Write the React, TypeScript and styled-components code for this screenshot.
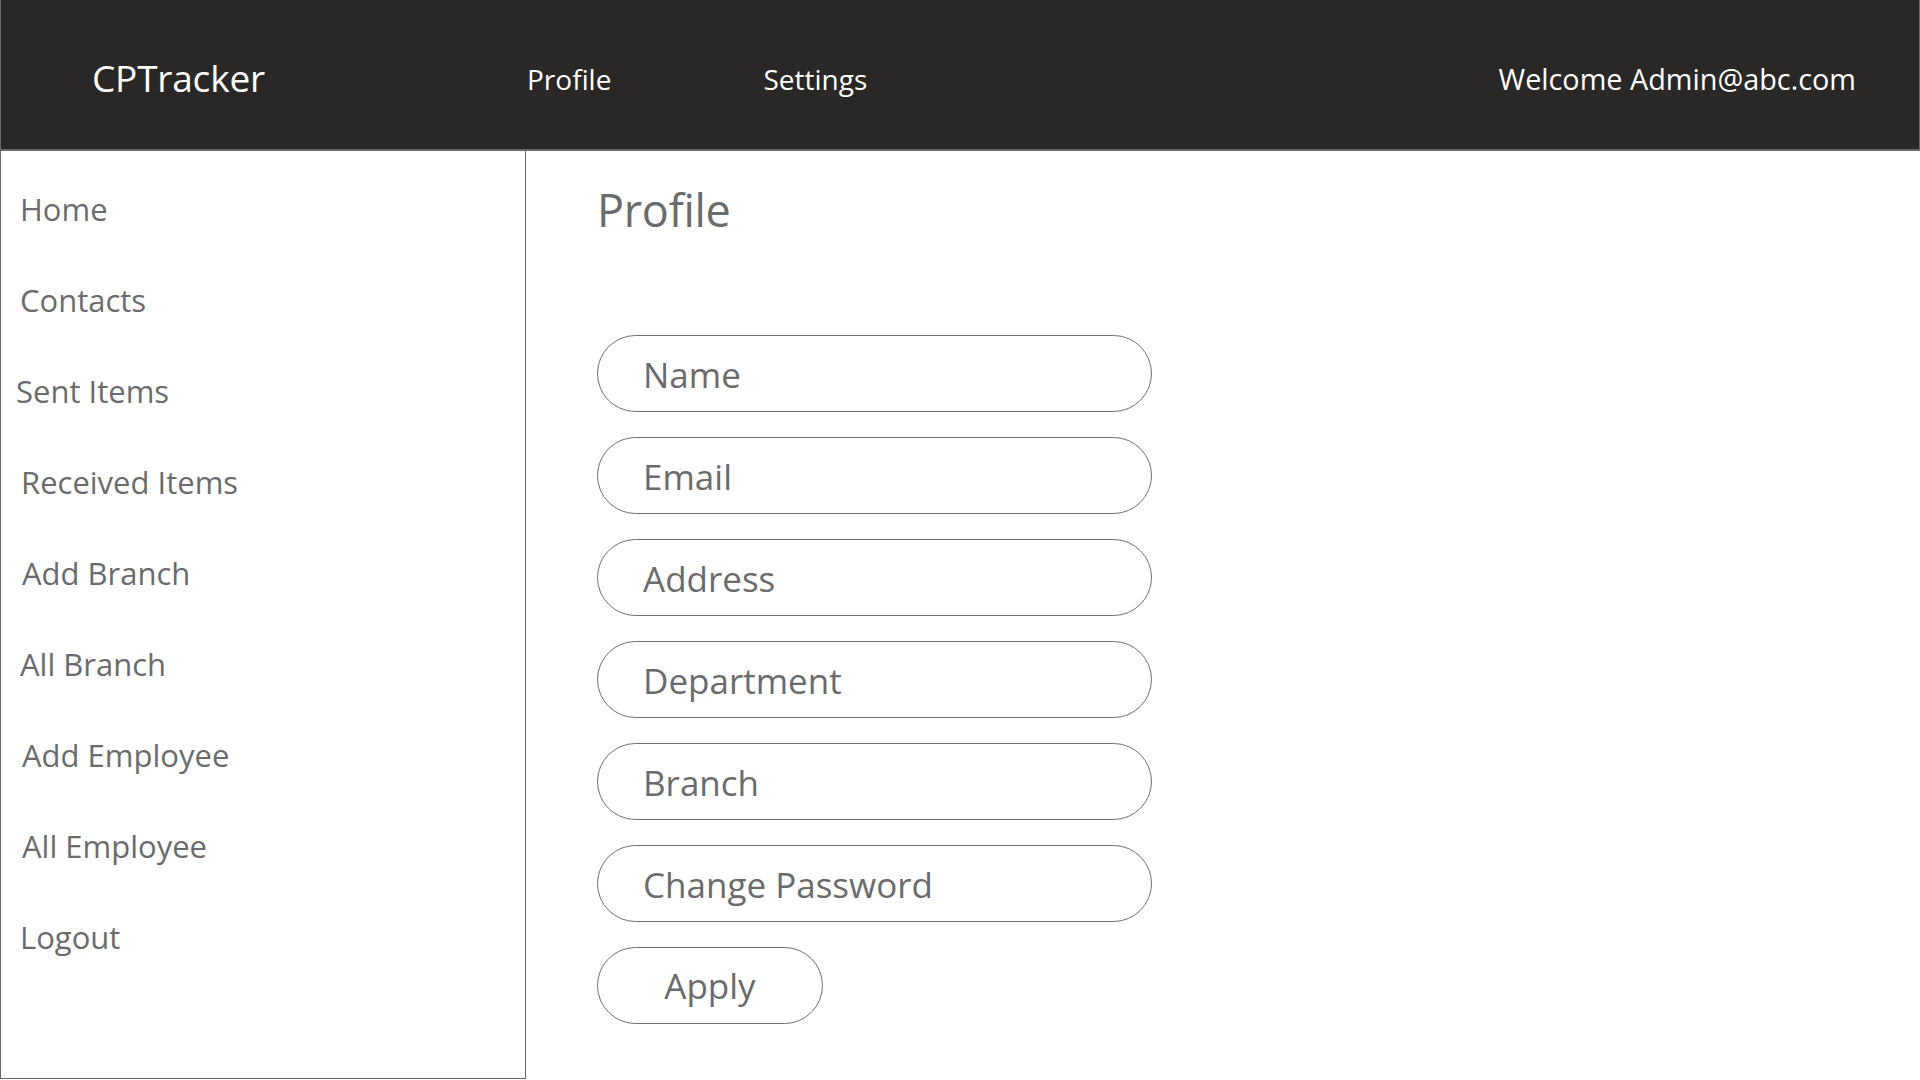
import React from "react";
import styled, { createGlobalStyle } from "styled-components";

const GlobalStyle = createGlobalStyle`
  html, body {
    margin: 0;
    padding: 0;
    background: #ffffff;
  }
  * {
    box-sizing: border-box;
  }
  body {
    font-family: "Open Sans", "Noto Sans", Arial, sans-serif;
  }
`;

const Page = styled.div`
  width: 1920px;
  height: 1080px;
  display: flex;
  flex-direction: column;
  overflow: hidden;
  background: #ffffff;
`;

const Header = styled.header`
  height: 151px;
  flex: none;
  display: flex;
  align-items: center;
  background: #292826;
  border: 1px solid #6a6a6a;
  border-top: none;
  border-bottom-width: 2px;
  padding: 0 63px 0 91px;
  color: #ffffff;
`;

const Brand = styled.div`
  width: 435px;
  font-size: 37px;
  line-height: 1;
  padding-top: 5px;
  letter-spacing: -0.2px;
`;

const Nav = styled.nav`
  display: flex;
  gap: 152px;
  padding-top: 8px;
`;

const NavLink = styled.a`
  font-size: 28px;
  color: #ffffff;
  text-decoration: none;
  line-height: 1;
`;

const Welcome = styled.div`
  margin-left: auto;
  font-size: 28.8px;
  line-height: 1;
  padding-top: 10px;
`;

const Body = styled.div`
  flex: 1;
  display: flex;
  min-height: 0;
`;

const Sidebar = styled.aside`
  width: 526px;
  height: 928px;
  flex: none;
  border: 1px solid #6a6a6a;
  border-top: none;
  padding-top: 13px;
  display: flex;
  flex-direction: column;
`;

const SideItem = styled.a<{ $indent: number }>`
  display: block;
  height: 91px;
  line-height: 91px;
  padding-left: ${(p) => p.$indent}px;
  font-size: 31px;
  color: #6b6b6b;
  text-decoration: none;
`;

const Main = styled.main`
  flex: 1;
  padding: 28px 0 0 71px;
  display: flex;
  flex-direction: column;
`;

const Title = styled.h1`
  margin: 0 0 94px 0;
  font-size: 45px;
  line-height: 62px;
  font-weight: 400;
  color: #6b6b6b;
  letter-spacing: -0.3px;
`;

const Form = styled.form`
  display: flex;
  flex-direction: column;
  gap: 25px;
  align-items: flex-start;
`;

const Field = styled.input`
  width: 555px;
  height: 77px;
  border: 1px solid #6f6f6f;
  border-radius: 40px;
  padding: 2px 0 0 45px;
  font-family: inherit;
  font-size: 35px;
  color: #6b6b6b;
  background: #ffffff;
  outline: none;

  &::placeholder {
    color: #6b6b6b;
    opacity: 1;
  }
`;

const ApplyButton = styled.button`
  width: 226px;
  height: 77px;
  border: 1px solid #6f6f6f;
  border-radius: 40px;
  background: #ffffff;
  font-family: inherit;
  font-size: 35px;
  color: #6b6b6b;
  padding: 0;
  cursor: pointer;
`;

const sideItems: { label: string; indent: number }[] = [
  { label: "Home", indent: 19 },
  { label: "Contacts", indent: 19 },
  { label: "Sent Items", indent: 15 },
  { label: "Received Items", indent: 20 },
  { label: "Add Branch", indent: 21 },
  { label: "All Branch", indent: 19 },
  { label: "Add Employee", indent: 21 },
  { label: "All Employee", indent: 21 },
  { label: "Logout", indent: 19 },
];

const fields = ["Name", "Email", "Address", "Department", "Branch", "Change Password"];

export default function App() {
  return (
    <>
      <GlobalStyle />
      <Page>
        <Header>
          <Brand>CPTracker</Brand>
          <Nav>
            <NavLink href="#">Profile</NavLink>
            <NavLink href="#">Settings</NavLink>
          </Nav>
          <Welcome>Welcome Admin@abc.com</Welcome>
        </Header>
        <Body>
          <Sidebar>
            {sideItems.map((item) => (
              <SideItem key={item.label} href="#" $indent={item.indent}>
                {item.label}
              </SideItem>
            ))}
          </Sidebar>
          <Main>
            <Title>Profile</Title>
            <Form onSubmit={(e) => e.preventDefault()}>
              {fields.map((f) => (
                <Field key={f} placeholder={f} />
              ))}
              <ApplyButton type="submit">Apply</ApplyButton>
            </Form>
          </Main>
        </Body>
      </Page>
    </>
  );
}
